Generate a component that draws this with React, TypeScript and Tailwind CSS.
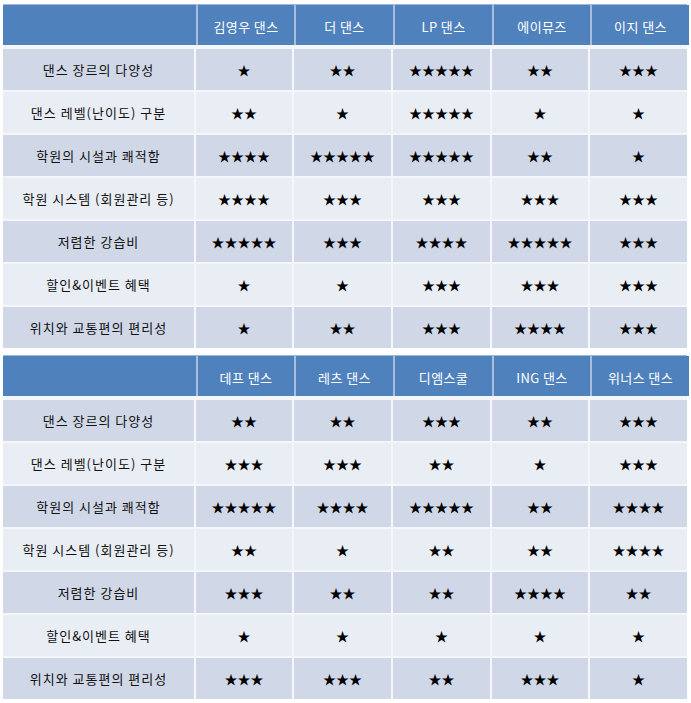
import React from "react";

type Table = { heads: string[]; rows: [string, number[]][] };

const tables: Table[] = [
  {
    heads: ["김영우 댄스", "더 댄스", "LP 댄스", "에이뮤즈", "이지 댄스"],
    rows: [
      ["댄스 장르의 다양성", [1, 2, 5, 2, 3]],
      ["댄스 레벨(난이도) 구분", [2, 1, 5, 1, 1]],
      ["학원의 시설과 쾌적함", [4, 5, 5, 2, 1]],
      ["학원 시스템 (회원관리 등)", [4, 3, 3, 3, 3]],
      ["저렴한 강습비", [5, 3, 4, 5, 3]],
      ["할인&이벤트 혜택", [1, 1, 3, 3, 3]],
      ["위치와 교통편의 편리성", [1, 2, 3, 4, 3]],
    ],
  },
  {
    heads: ["데프 댄스", "레츠 댄스", "디엠스쿨", "ING 댄스", "위너스 댄스"],
    rows: [
      ["댄스 장르의 다양성", [2, 2, 3, 2, 3]],
      ["댄스 레벨(난이도) 구분", [3, 3, 2, 1, 3]],
      ["학원의 시설과 쾌적함", [5, 4, 5, 2, 4]],
      ["학원 시스템 (회원관리 등)", [2, 1, 2, 2, 4]],
      ["저렴한 강습비", [3, 2, 2, 4, 2]],
      ["할인&이벤트 혜택", [1, 1, 1, 1, 1]],
      ["위치와 교통편의 편리성", [3, 3, 2, 3, 1]],
    ],
  },
];

const cols = "grid grid-cols-[191px_96px_97px_97px_96px_97px] gap-x-[2px]";

function DataTable({ t }: { t: Table }) {
  return (
    <div className="flex flex-col w-[684px]">
      <div className={`${cols} bg-[#a9bedd] border-t border-[#9fb6db] border-l-2 border-l-[#b7c4d8] h-[41px]`}>
        <div className="bg-[#4f81bd] -ml-[2px] pl-[2px]" />
        {t.heads.map((h) => (
          <div key={h} className="bg-[#4f81bd] flex items-center justify-center pt-[3px] text-white text-[13px] tracking-[0.4px]">
            {h}
          </div>
        ))}
      </div>
      <div className="h-[4px] bg-[#f4f6fa]" />
      <div className="flex flex-col gap-y-[2px] bg-[#f4f6fa]">
        {t.rows.map(([label, vals], i) => {
          const bg = i % 2 === 0 ? "bg-[#d0d8e8]" : "bg-[#e9edf4]";
          return (
            <div key={label} className={`${cols} h-[41px] bg-[#f4f6fa]`}>
              <div className={`${bg} flex items-center justify-center text-[13px] tracking-[1px] text-[#111]`}>{label}</div>
              {vals.map((v, j) => (
                <div key={j} className={`${bg} flex items-center justify-center text-[13px] text-black`}>
                  {"★".repeat(v)}
                </div>
              ))}
            </div>
          );
        })}
      </div>
    </div>
  );
}

export default function App() {
  return (
    <div
      className="w-[691px] h-[703px] bg-white pl-[3px] pt-[4px] flex flex-col gap-[7px]"
      style={{ fontFamily: '"Noto Sans CJK KR", "Noto Sans", sans-serif' }}
    >
      {tables.map((t, i) => (
        <DataTable key={i} t={t} />
      ))}
    </div>
  );
}
